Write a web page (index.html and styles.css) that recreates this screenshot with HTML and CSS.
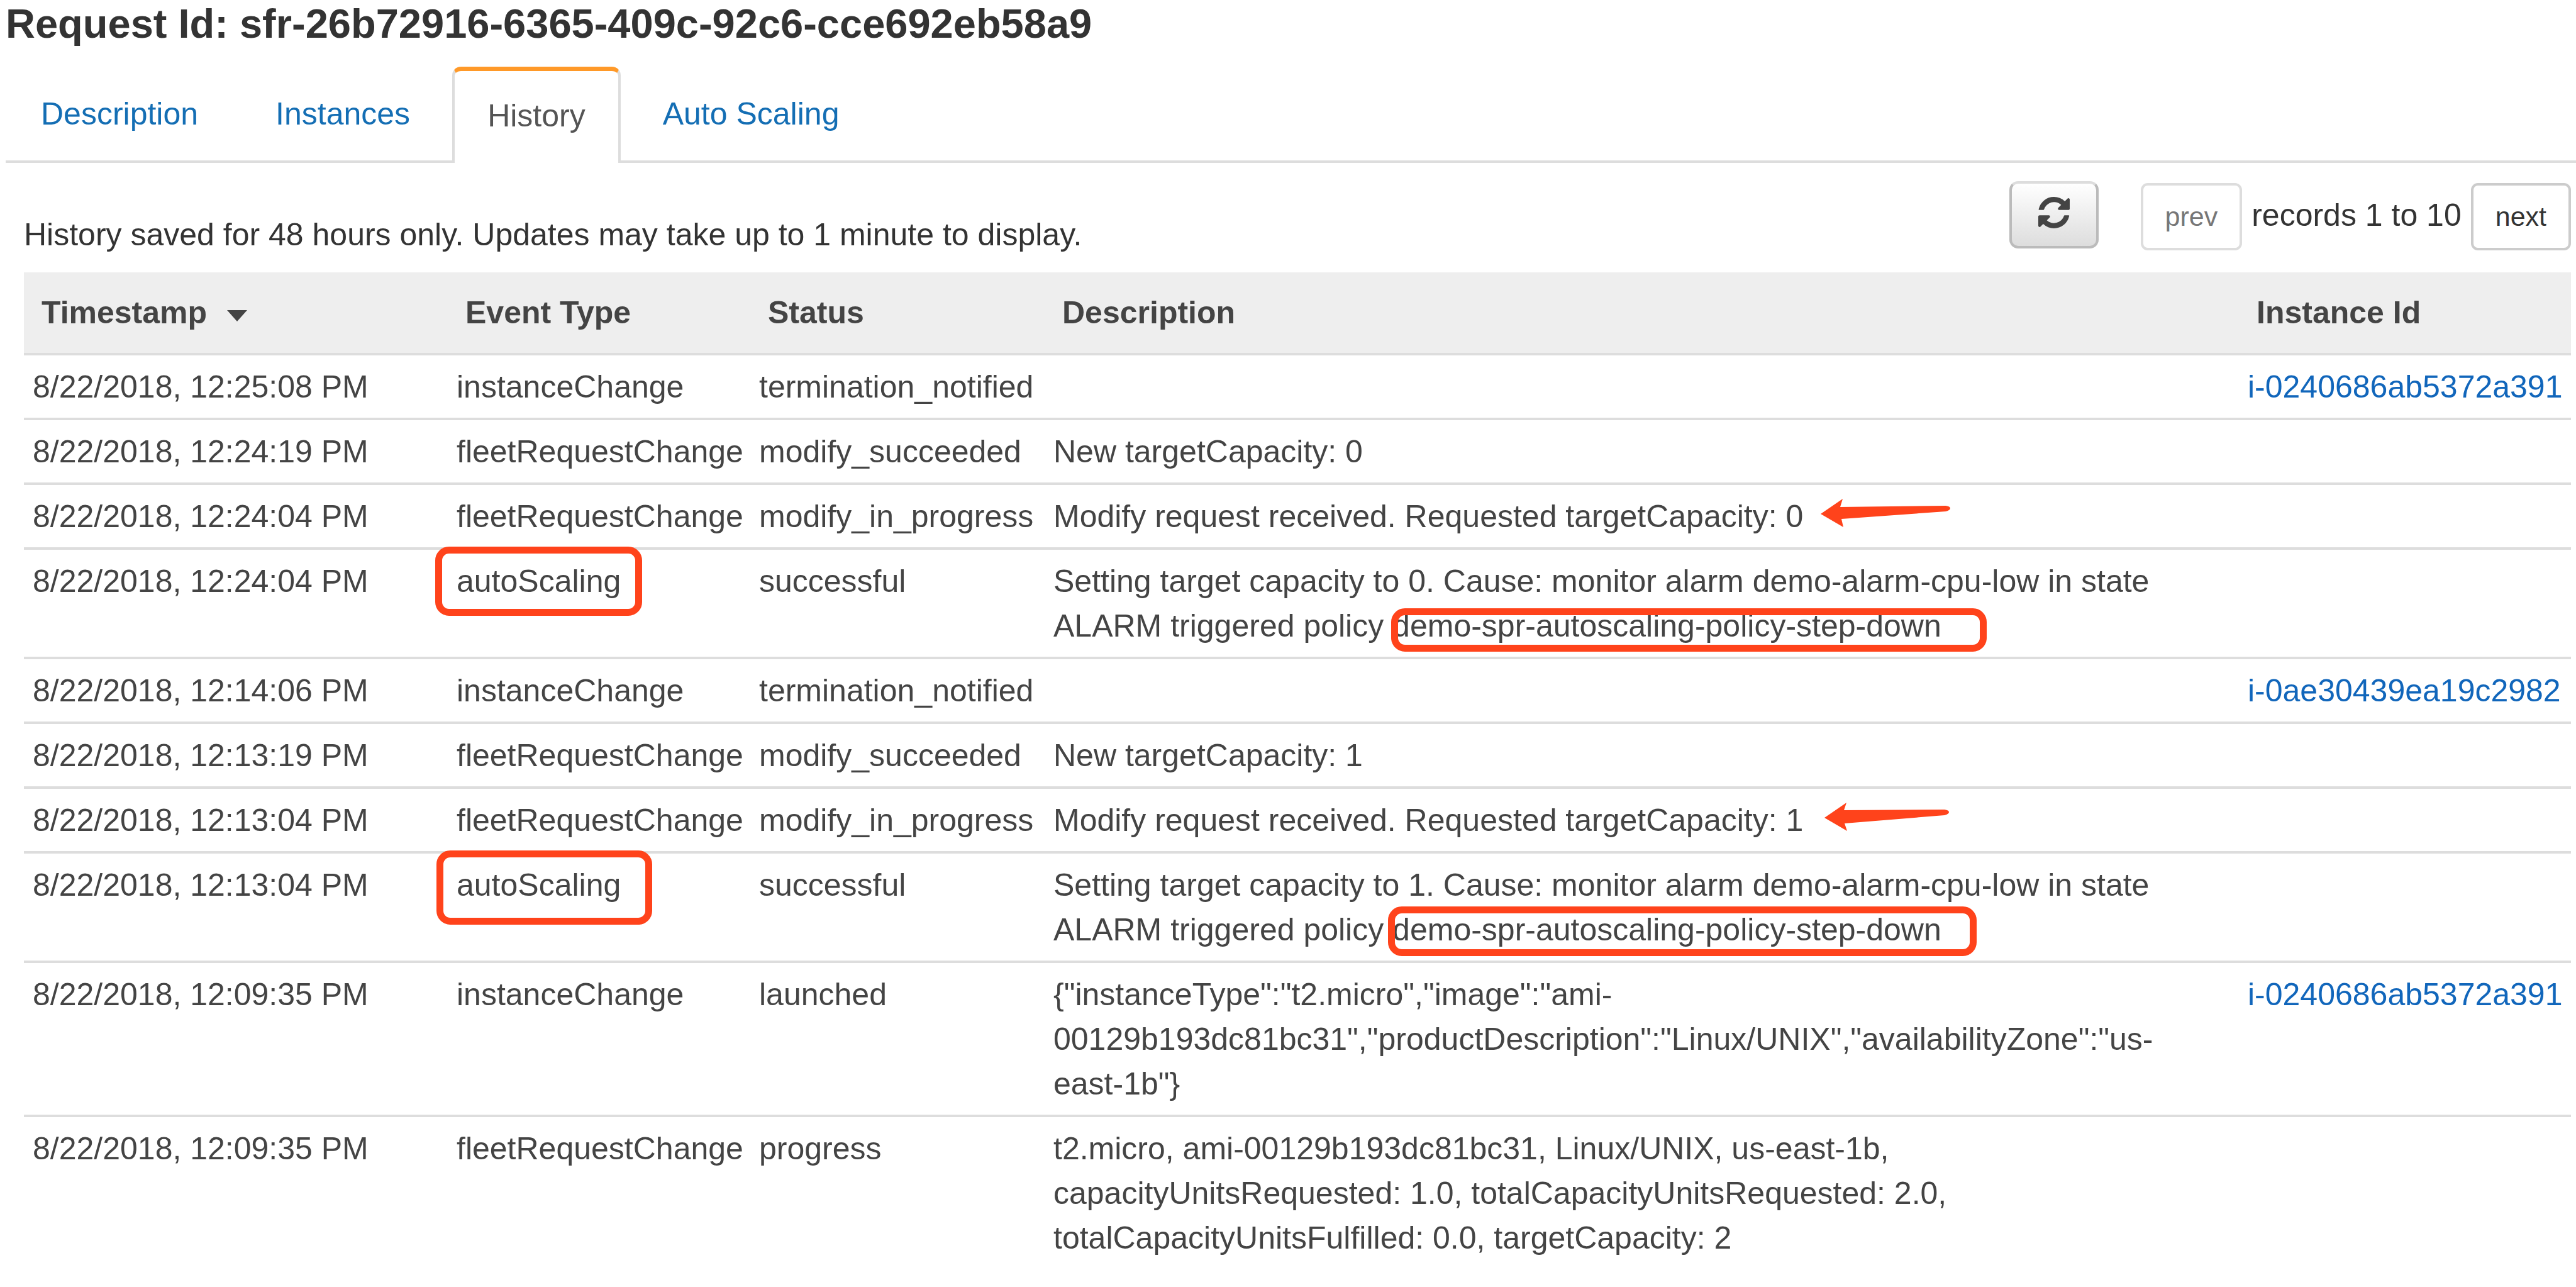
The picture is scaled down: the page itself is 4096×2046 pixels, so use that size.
FILE: index.html
```html
<!DOCTYPE html>
<html lang="en">
<head>
<meta charset="utf-8">
<title>Spot Fleet Request History</title>
<link rel="stylesheet" href="styles.css">
</head>
<body>
<h1 class="title">Request Id: sfr-26b72916-6365-409c-92c6-cce692eb58a9</h1>
<nav class="tabs">
  <a class="tab" href="#description">Description</a>
  <a class="tab" href="#instances">Instances</a>
  <a class="tab tab-active" href="#history" aria-current="page">History</a>
  <a class="tab" href="#autoscaling">Auto Scaling</a>
</nav>
<main class="panel">
  <div class="toolbar">
    <p class="note">History saved for 48 hours only. Updates may take up to 1 minute to display.</p>
    <button class="refresh" type="button" aria-label="Refresh">
      <svg class="refresh-icon" viewBox="0 0 1536 1536" aria-hidden="true"><path d="M1511 928q0 5-1 7-64 268-268 434.500T764 1536q-146 0-282.500-55T238 1324l-129 129q-19 19-45 19t-45-19-19-45V960q0-26 19-45t45-19h448q26 0 45 19t19 45-19 45l-137 137q71 66 161 102t187 36q134 0 250-65t186-179q11-17 53-117 8-23 30-23h192q13 0 22.500 9.500t9.500 22.500zm25-800v448q0 26-19 45t-45 19h-448q-26 0-45-19t-19-45 19-45l138-138Q969 256 768 256q-134 0-250 65T332 500q-11 17-53 117-8 23-30 23H50q-13 0-22.500-9.500T18 608v-7q65-268 270-434.500T768 0q146 0 284 55.500T1297 212l130-129q19-19 45-19t45 19 19 45z"/></svg>
    </button>
    <div class="pager">
      <button class="page-button" type="button" disabled>prev</button>
      <span>records 1 to 10</span>
      <button class="page-button" type="button">next</button>
    </div>
  </div>
  <table class="history">
    <colgroup><col class="col-time"><col class="col-event"><col class="col-status"><col><col class="col-instance"></colgroup>
    <thead>
      <tr><th scope="col" aria-sort="descending">Timestamp<svg class="sort" viewBox="0 0 32 18" aria-hidden="true"><path d="M0 0h32L16 18z"/></svg></th><th scope="col">Event Type</th><th scope="col">Status</th><th scope="col">Description</th><th scope="col">Instance Id</th></tr>
    </thead>
    <tbody>
      <tr><td>8/22/2018, 12:25:08 PM</td><td>instanceChange</td><td>termination_notified</td><td></td><td><a href="#i-0240686ab5372a391">i-0240686ab5372a391</a></td></tr>
      <tr><td>8/22/2018, 12:24:19 PM</td><td>fleetRequestChange</td><td>modify_succeeded</td><td>New targetCapacity: 0</td><td></td></tr>
      <tr><td>8/22/2018, 12:24:04 PM</td><td>fleetRequestChange</td><td>modify_in_progress</td><td><span class="marked">Modify request received. Requested targetCapacity: 0<svg class="arrow" viewBox="0 0 206 45" aria-hidden="true"><path d="M0 24 35 0 31 13 199 11Q206 12 206 15T199 20L33 32l3 13z"/></svg></span></td><td></td></tr>
      <tr><td>8/22/2018, 12:24:04 PM</td><td><span class="marked">autoScaling<i class="box box-event"></i></span></td><td>successful</td><td>Setting target capacity to 0. Cause: monitor alarm demo-alarm-cpu-low in state ALARM triggered policy demo-spr-autoscaling-policy-step-down<span class="marked"><i class="box box-policy"></i></span></td><td></td></tr>
      <tr><td>8/22/2018, 12:14:06 PM</td><td>instanceChange</td><td>termination_notified</td><td></td><td><a href="#i-0ae30439ea19c2982">i-0ae30439ea19c2982</a></td></tr>
      <tr><td>8/22/2018, 12:13:19 PM</td><td>fleetRequestChange</td><td>modify_succeeded</td><td>New targetCapacity: 1</td><td></td></tr>
      <tr><td>8/22/2018, 12:13:04 PM</td><td>fleetRequestChange</td><td>modify_in_progress</td><td><span class="marked">Modify request received. Requested targetCapacity: 1<svg class="arrow arrow-short" viewBox="0 0 198 45" aria-hidden="true"><path d="M0 24 35 0 31 12 191 11Q198 12 198 15T191 20L32 33l4 12z"/></svg></span></td><td></td></tr>
      <tr><td>8/22/2018, 12:13:04 PM</td><td><span class="marked">autoScaling<i class="box box-event-large"></i></span></td><td>successful</td><td>Setting target capacity to 1. Cause: monitor alarm demo-alarm-cpu-low in state ALARM triggered policy demo-spr-autoscaling-policy-step-down<span class="marked"><i class="box box-policy-tall"></i></span></td><td></td></tr>
      <tr><td>8/22/2018, 12:09:35 PM</td><td>instanceChange</td><td>launched</td><td>{"instanceType":"t2.micro","image":"ami-<wbr>00129b193dc81bc31","productDescription":"Linux/UNIX","availabilityZone":"us-<wbr>east&#8288;-&#8288;1b"}</td><td><a href="#i-0240686ab5372a391">i-0240686ab5372a391</a></td></tr>
      <tr><td>8/22/2018, 12:09:35 PM</td><td>fleetRequestChange</td><td>progress</td><td>t2.micro, ami-00129b193dc81bc31, Linux/UNIX, us-east-1b, capacityUnitsRequested: 1.0, totalCapacityUnitsRequested: 2.0, totalCapacityUnitsFulfilled: 0.0, targetCapacity: 2</td><td></td></tr>
    </tbody>
  </table>
</main>
</body>
</html>
```

FILE: styles.css
```css
* { box-sizing: border-box; }

body {
  margin: 0;
  background: #fff;
  color: #333;
  font: 50px/71px "Liberation Sans", Arial, sans-serif;
}

a { color: #1166bb; text-decoration: none; }

.title {
  margin: 0;
  padding: 0 9px;
  font-size: 65px;
  line-height: 76px;
}

.tabs {
  display: flex;
  align-items: flex-end;
  gap: 11px;
  height: 153px;
  margin: 30px 0 0 9px;
  border-bottom: 4px solid #ddd;
}

.tab {
  height: 149px;
  padding: 40px 56px 0;
  color: #146eb4;
}

.tab-active {
  height: 153px;
  margin-bottom: -4px;
  padding: 36px 52px 0;
  border: solid #ddd;
  border-width: 7px 4px 0;
  border-top-color: #ff9928;
  border-radius: 14px 14px 0 0;
  background: #fff;
  color: #555;
}

.panel { padding: 29px 8px 0 38px; }

.toolbar {
  display: flex;
  align-items: flex-start;
  height: 145px;
}

.note { flex: 1; margin: 50px 0 0; }

.refresh {
  display: flex;
  align-items: center;
  justify-content: center;
  width: 142px;
  height: 107px;
  margin-right: 67px;
  padding: 0 0 8px;
  border: 4px solid #bbb;
  border-top-color: #ddd;
  border-radius: 14px;
  background: linear-gradient(#fff, #ddd);
}

.refresh-icon { width: 50px; height: 50px; fill: #444; }

.pager { display: flex; align-items: baseline; gap: 15px; padding-top: 3px; }

.page-button {
  height: 107px;
  padding: 0 35px;
  border: 4px solid #ccc;
  border-radius: 11px;
  background: #fff;
  color: #333;
  font: 43px/71px "Liberation Sans", Arial, sans-serif;
}

.page-button:disabled { border-color: #ddd; color: #777; }

.history {
  width: 100%;
  table-layout: fixed;
  border-collapse: separate;
  border-spacing: 0;
  color: #444;
}

.col-time { width: 674px; }
.col-event { width: 481px; }
.col-status { width: 468px; }
.col-instance { width: 528px; }

.history th {
  height: 132px;
  padding: 0 12px 0 28px;
  border-bottom: 4px solid #ddd;
  background: #eee;
  text-align: left;
}

.history td {
  height: 103px;
  padding: 15px 12px 13px 14px;
  border-bottom: 4px solid #ddd;
  vertical-align: top;
}

.history tbody tr:last-child td { border-bottom: 0; }

.sort { width: 32px; height: 18px; margin-left: 32px; vertical-align: 3px; fill: #444; }

/* Red call-outs drawn over the table */
.marked { position: relative; white-space: nowrap; }

.box {
  position: absolute;
  border: 11px solid #ff431b;
  border-radius: 22px;
  pointer-events: none;
}

.box-event { inset: -27px -34px -27px -34px; }
.box-event-large { inset: -27px -50px -35px -32px; }
.box-policy { inset: 0 -72px -13px -875px; }
.box-policy-tall { inset: -9px -56px -14px -880px; }

.arrow {
  position: absolute;
  top: 0;
  left: calc(100% + 28px);
  width: 206px;
  height: 45px;
  fill: #ff431b;
}

.arrow-short { left: calc(100% + 34px); width: 198px; }
```
